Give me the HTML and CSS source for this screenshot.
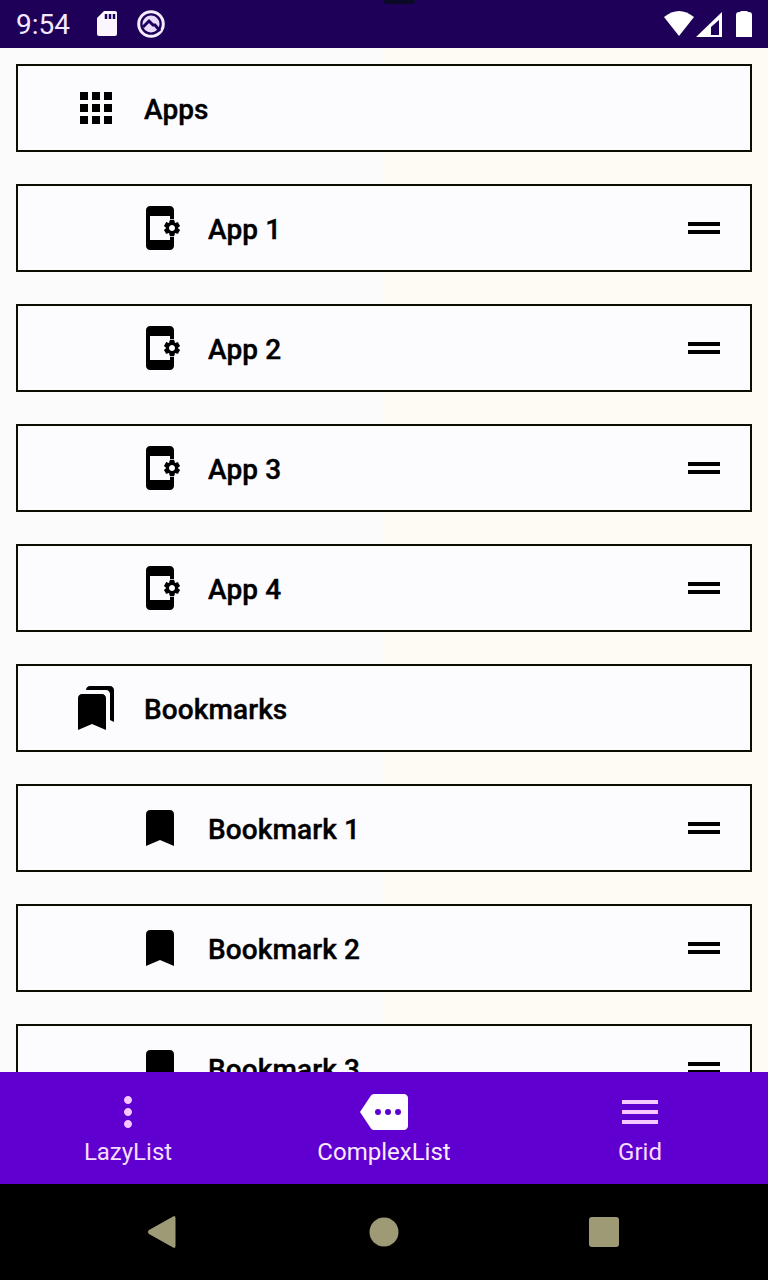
FILE: index.html
```html
<!DOCTYPE html>
<html lang="en">
<head>
<meta charset="utf-8">
<title>ComplexList</title>
<link rel="stylesheet" href="styles.css">
</head>
<body>
<svg class="defs" width="0" height="0">
  <symbol id="app" viewBox="0 0 24 24"><path fill-rule="evenodd" d="M19 7.6V3c0-1.1-.9-2-2-2H7c-1.1 0-2 .9-2 2v18c0 1.1.9 2 2 2h10c1.100 0 2-.9 2-2v-4.600h-2V18H7V6h10v1.600z"/><path fill-rule="evenodd" d="M21.810 12.740l-.820-.630v-.220l.800-.630c.160-.120.200-.340.100-.510l-.850-1.480c-.070-.130-.210-.200-.350-.200-.050 0-.100.010-.150.030l-.950.380c-.080-.050-.110-.070-.190-.110l-.150-1.010c-.030-.210-.200-.360-.400-.360h-1.710c-.200 0-.370.150-.400.340l-.140 1.010c-.030.020-.070.030-.100.050l-.090.060-.950-.380c-.050-.020-.100-.030-.150-.030-.140 0-.270.070-.350.200l-.850 1.480c-.100.170-.060.390.100.510l.800.630v.230l-.800.630c-.160.120-.200.340-.100.510l.850 1.480c.070.130.210.200.350.200.050 0 .100-.010.150-.030l.950-.370c.080.050.120.070.200.110l.150 1.010c.030.200.200.340.400.340h1.710c.200 0 .370-.150.400-.340l.150-1.010c.030-.020.070-.030.100-.050l.090-.060.950.380c.050.020.100.030.150.030.140 0 .270-.070.350-.200l.850-1.480c.100-.170.060-.390-.100-.510zM18 13.500c-.830 0-1.500-.670-1.500-1.500s.670-1.500 1.500-1.500 1.500.670 1.500 1.500-.670 1.500-1.500 1.500z"/></symbol>
  <symbol id="bookmark" viewBox="0 0 24 24"><path d="M17 3H7c-1.100 0-2 .9-2 2v16l7-3 7 3V5c0-1.100-.9-2-2-2z"/></symbol>
  <symbol id="drag" viewBox="0 0 24 24"><path d="M20 9H4v2h16V9zM4 15h16v-2H4v2z"/></symbol>
</svg>
<div class="screen">
  <header class="status">
    <span class="clock">9:54</span>
    <svg class="sd" width="20" height="26" viewBox="0 0 20 26"><path fill="#fbf6ff" d="M7 0h11q2 0 2 2v21q0 2-2 2H2q-2 0-2-2V7z"/><path stroke="#1d0060" stroke-width="2.500" d="M9 3v5M13 3v5M17 3v5"/></svg>
    <svg class="logo" width="28" height="28" viewBox="0 0 28 28" fill="none"><circle cx="14" cy="14" r="12.300" stroke="#f5edff" stroke-width="3"/><circle cx="14" cy="14" r="8.500" fill="#e9dcfa"/><path d="M6 17l6-6 4 4 2 0 5 6" stroke="#1d0060" stroke-width="3"/></svg>
    <svg class="signals" width="90" height="28" viewBox="0 0 90 28"><path fill="#fff" d="M0 7Q15-5 30 7L15 26z"/><path fill="#fff" fill-rule="evenodd" d="M58 2v25H32zM55 10L47 17v8h8z"/><path fill="#fff" d="M72 5q0-3 3-3h1q0-1 2-1h4q2 0 2 1h1q3 0 3 3v22H72z"/></svg>
    <span class="cutout"></span>
  </header>
  <main class="list">
    <div class="row group"><svg class="icon" viewBox="0 0 24 24"><path d="M4 8h4V4H4v4zm6 0h4V4h-4v4zm6 0h4V4h-4v4zM4 14h4v-4H4v4zm6 0h4v-4h-4v4zm6 0h4v-4h-4v4zM4 20h4v-4H4v4zm6 0h4v-4h-4v4zm6 0h4v-4h-4v4z"/></svg><span class="label">Apps</span></div>
    <div class="row"><svg class="icon"><use href="#app"/></svg><span class="label">App 1</span><svg class="icon"><use href="#drag"/></svg></div>
    <div class="row"><svg class="icon"><use href="#app"/></svg><span class="label">App 2</span><svg class="icon"><use href="#drag"/></svg></div>
    <div class="row"><svg class="icon"><use href="#app"/></svg><span class="label">App 3</span><svg class="icon"><use href="#drag"/></svg></div>
    <div class="row"><svg class="icon"><use href="#app"/></svg><span class="label">App 4</span><svg class="icon"><use href="#drag"/></svg></div>
    <div class="row group"><svg class="icon" viewBox="0 0 24 24"><path d="M19 18l2 1V3c0-1.100-.9-2-2-2H8.990C7.890 1 7 1.900 7 3h10c1.100 0 2 .9 2 2v13zM15 5H5c-1.100 0-2 .9-2 2v16l7-3 7 3V7c0-1.100-.9-2-2-2z"/></svg><span class="label">Bookmarks</span></div>
    <div class="row"><svg class="icon"><use href="#bookmark"/></svg><span class="label">Bookmark 1</span><svg class="icon"><use href="#drag"/></svg></div>
    <div class="row"><svg class="icon"><use href="#bookmark"/></svg><span class="label">Bookmark 2</span><svg class="icon"><use href="#drag"/></svg></div>
    <div class="row"><svg class="icon"><use href="#bookmark"/></svg><span class="label">Bookmark 3</span><svg class="icon"><use href="#drag"/></svg></div>
  </main>
  <nav class="tabs">
    <div class="tab"><svg class="icon" viewBox="0 0 24 24"><path d="M12 8c1.100 0 2-.9 2-2s-.9-2-2-2-2 .9-2 2 .9 2 2 2zm0 2c-1.100 0-2 .9-2 2s.9 2 2 2 2-.9 2-2-.9-2-2-2zm0 6c-1.100 0-2 .9-2 2s.9 2 2 2 2-.9 2-2-.9-2-2-2z"/></svg><span>LazyList</span></div>
    <div class="tab active"><svg class="icon" viewBox="0 0 24 24"><path fill-rule="evenodd" d="M22 3H7c-.690 0-1.230.350-1.590.880L0 12l5.410 8.110c.360.530.900.890 1.590.890h15c1.100 0 2-.9 2-2V5c0-1.100-.9-2-2-2zM9 13.500a1.500 1.500 0 1 1 0-3 1.500 1.500 0 0 1 0 3zm5 0a1.500 1.500 0 1 1 0-3 1.500 1.500 0 0 1 0 3zm5 0a1.500 1.500 0 1 1 0-3 1.500 1.500 0 0 1 0 3z"/></svg><span>ComplexList</span></div>
    <div class="tab"><svg class="icon" viewBox="0 0 24 24"><path d="M3 18h18v-2H3v2zm0-5h18v-2H3v2zm0-7v2h18V6H3z"/></svg><span>Grid</span></div>
  </nav>
  <footer class="system">
    <svg width="28" height="32" viewBox="0 0 28 32"><path d="M26 0q1.500 0 1.500 2v28q0 2-1.500 2L1 18q-2-2 0-4z"/></svg>
    <svg width="30" height="30" viewBox="0 0 30 30"><circle cx="16" cy="15" r="14.500"/></svg>
    <svg width="30" height="30" viewBox="0 0 30 30"><rect width="30" height="30" rx="3"/></svg>
  </footer>
</div>
</body>
</html>
```
FILE: styles.css
```css
* { box-sizing: border-box; }
body { margin: 0; font-family: Roboto, sans-serif; background: #fff; }
.defs { position: absolute; }
.screen { width: 768px; height: 1280px; display: flex; flex-direction: column; overflow: hidden; }
.status { position: relative; flex: none; height: 48px; background: #1f0059; color: #f4eaff; display: flex; align-items: center; padding: 0 16px; }
.clock { font-size: 28px; line-height: 48px; width: 81px; padding-top: 2px; }
.logo { margin-left: 20px; }
.signals { margin-left: auto; margin-right: -2px; }
.cutout { position: absolute; left: 384px; top: 0; width: 31px; height: 4px; background: #0a0a24; border-radius: 0 0 4px 4px; }
.list { flex: 1; min-height: 0; overflow: hidden; padding: 16px; display: flex; flex-direction: column; gap: 32px; background: linear-gradient(90deg, #fcfbfb 50%, #fdfbf3 50%); }
.row { flex: none; height: 88px; border: 2px solid #0c0c00; background: #fcfcff; display: flex; align-items: center; padding: 0 22px 0 118px; }
.group { padding-left: 54px; }
.icon { width: 48px; height: 48px; flex: none; fill: #000; }
.label { flex: 1; margin-left: 24px; font-size: 28px; line-height: 36px; font-weight: 500; color: #000; padding-top: 3px; letter-spacing: 0.1px; -webkit-text-stroke: 0.4px #000; }
.tabs { flex: none; height: 112px; background: #6000d0; color: #f6dcff; display: flex; }
.tab { flex: 1; display: flex; flex-direction: column; align-items: center; padding-top: 16px; font-size: 24px; line-height: 32px; }
.tab .icon { fill: #f7c8ff; }
.active { color: #faeaff; }
.active .icon { fill: #fff; }
.system { flex: none; height: 96px; background: #000; display: flex; align-items: center; justify-content: space-between; padding: 0 149px 0 148px; }
.system svg { fill: #9e9a76; overflow: visible; }
```
